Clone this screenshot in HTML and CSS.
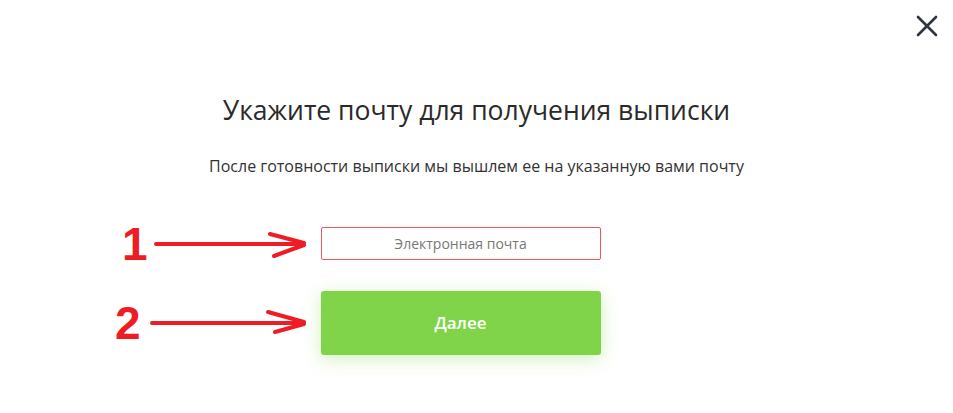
FILE: index.html
```html
<!DOCTYPE html>
<html>
    <head>
        <title>Выписка на почту</title>
        <link rel="stylesheet" href="styles.css">
    </head>
    <body>
        <div class="modal">
            <div class="top">
                <button class="close" title="Закрыть">
                    <svg width="22" height="22" viewBox="0 0 22 22">
                        <path d="M2 2 L20 20 M20 2 L2 20" stroke="#2b3640" stroke-width="2.6" stroke-linecap="round"/>
                    </svg>
                </button>
            </div>
            <h1>Укажите почту для получения выписки</h1>
            <p class="hint">После готовности выписки мы вышлем ее на указанную вами почту</p>
            <div class="form">
                <div class="field">
                    <input type="email" placeholder="Электронная почта">
                    <div class="mark mark-1">
                        <span class="num">1</span>
                        <svg width="153" height="30" viewBox="0 0 153 30">
                            <path d="M2 15 H150 M116 5 L150 14 M120 27 L150 16" stroke="#ee1c25" stroke-width="4" fill="none" stroke-linecap="round"/>
                        </svg>
                    </div>
                </div>
                <div class="field">
                    <button class="next">Далее</button>
                    <div class="mark mark-2">
                        <span class="num">2</span>
                        <svg width="157" height="30" viewBox="0 0 157 30">
                            <path d="M2 15 H154 M118 4 L154 14 M125 24 L154 16" stroke="#ee1c25" stroke-width="4" fill="none" stroke-linecap="round"/>
                        </svg>
                    </div>
                </div>
            </div>
        </div>
    </body>
</html>
```

FILE: styles.css
```css
body{
    margin: 0;
    padding: 0;
    font-family: "Open Sans", sans-serif;
    color: #2b2b2b;
    background: #fff;
}

.modal{
    width: 953px;
    height: 413px;
    display: flex;
    flex-direction: column;
    align-items: center;
}

.top{
    align-self: stretch;
    display: flex;
    justify-content: flex-end;
    padding: 15px 15px 0 0;
}

.close{
    border: none;
    background: none;
    padding: 0;
    width: 22px;
    height: 22px;
    cursor: pointer;
}

h1{
    margin: 55px 0 0 0;
    font-size: 26.5px;
    font-weight: 400;
    line-height: 36px;
    color: #2a2a2a;
}

.hint{
    margin: 28px 0 0 0;
    font-size: 16px;
    line-height: 20px;
    color: #333;
}

.form{
    margin: 51px 32px 0 0;
    display: flex;
    flex-direction: column;
    gap: 31px;
}

.field{
    position: relative;
    width: 280px;
}

input{
    box-sizing: border-box;
    width: 280px;
    height: 33px;
    border: 1px solid #f05656;
    border-radius: 2px;
    text-align: center;
    font-family: inherit;
    font-size: 14px;
    outline: none;
}
input::placeholder{
    color: #777;
}

.next{
    width: 280px;
    height: 64px;
    padding-bottom: 3px;
    border: none;
    border-radius: 3px;
    background: #80d449;
    color: #fff;
    font-family: inherit;
    font-size: 17px;
    font-weight: 600;
    box-shadow: 0 4px 18px rgba(128, 212, 73, 0.35);
    cursor: pointer;
}

.mark{
    position: absolute;
    top: 50%;
    display: flex;
    align-items: center;
    transform: translateY(-50%);
}
.mark-1{
    right: 294px;
    gap: 6px;
}
.mark-2{
    right: 294px;
    gap: 9px;
}

.num{
    font-family: "Liberation Sans", sans-serif;
    font-weight: 700;
    font-size: 46px;
    line-height: 40px;
    color: #ee1c25;
}
```
